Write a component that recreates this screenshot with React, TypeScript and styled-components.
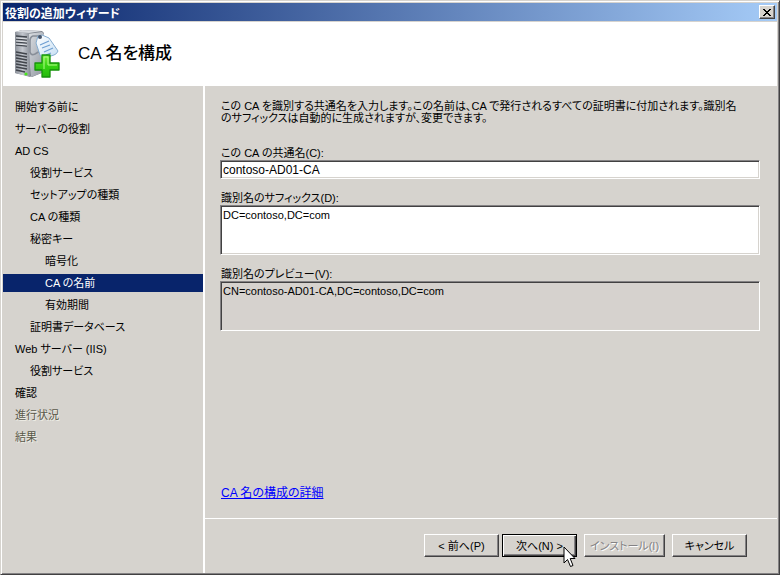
import React, { useState } from "react";
import styled, { createGlobalStyle, css } from "styled-components";

const face = "#d6d3ce";
const navy = "#08246b";

const GlobalStyle = createGlobalStyle`
  *, *::before, *::after { box-sizing: border-box; }
  body { margin: 0; background: ${face}; }
  body, button, input, textarea {
    font-family: "Liberation Sans", "Noto Sans CJK JP", sans-serif;
    font-size: 11px;
    font-feature-settings: "palt";
    color: #000;
  }
`;

const sunken = css`
  border: 1px solid;
  border-color: #848284 #fff #fff #848284;
  box-shadow: inset 1px 1px 0 #424142, inset -1px -1px 0 ${face};
`;

const raised = css`
  border: 1px solid;
  border-color: #fff #424142 #424142 #fff;
  box-shadow: inset -1px -1px 0 #848284;
`;

const Window = styled.main`
  display: flex;
  flex-direction: column;
  min-height: 100vh;
  padding: 2px 1px 0;
  background: ${face};
  border: 1px solid;
  border-color: ${face} #424142 #424142 ${face};
  box-shadow: inset 1px 1px 0 #fff, inset -1px -1px 0 #848284;
`;

const Frame = styled.div`
  display: flex;
  flex-direction: column;
  flex: 1;
  padding: 0 1px 1px 1px;
`;

const TitleBar = styled.header`
  display: flex;
  align-items: center;
  justify-content: space-between;
  height: 18px;
  padding: 0 2px;
  background: linear-gradient(to right, ${navy}, #a5cbf7);
  color: #fff;
  font-size: 12px;
  font-weight: 700;
`;

const CloseButton = styled.button`
  ${raised}
  display: grid;
  place-items: center;
  width: 16px;
  height: 14px;
  padding: 0;
  background: ${face};
`;

const Banner = styled.div`
  display: flex;
  align-items: center;
  gap: 15px;
  height: 65px;
  padding-left: 10px;
  background: #fff;
  border-top: 1px solid ${face};
`;

const Heading = styled.h1`
  margin: 0;
  font-size: 17px;
  line-height: 24px;
  font-weight: 500;
`;

const Body = styled.div`
  display: grid;
  grid-template-columns: 202px minmax(0, 1fr);
  flex: 1;
`;

const Steps = styled.nav`
  display: flex;
  flex-direction: column;
  gap: 4px;
  padding-top: 12px;
  border-right: 2px solid #fff;
`;

const Step = styled.button<{ $level: number }>`
  height: 18px;
  padding: 0 0 0 ${(p) => 12 + p.$level * 15}px;
  border: 0;
  background: none;
  line-height: 18px;
  text-align: left;
  white-space: nowrap;

  &[aria-current="step"] {
    background: ${navy};
    color: #fff;
  }

  &:disabled {
    color: #5a594a;
    text-shadow: 1px 1px 0 #efefe7;
  }
`;

const Page = styled.section`
  display: flex;
  flex-direction: column;
`;

const Form = styled.form`
  display: flex;
  flex-direction: column;
  flex: 1;
  padding: 14px 17px 18px 15px;
`;

const Description = styled.p`
  margin: 0 0 22px;
  padding-left: 1px;
  line-height: 12px;
`;

const Field = styled.div`
  display: flex;
  flex-direction: column;
  margin-bottom: 12px;
`;

const Label = styled.label`
  padding-left: 1px;
  line-height: 14px;
`;

const TextBox = styled.input`
  ${sunken}
  width: 100%;
  height: 19px;
  padding: 0 2px;
  background: #fff;
  font-size: 12px;
  outline: 0;
`;

const TextArea = styled.textarea`
  ${sunken}
  width: 100%;
  height: 50px;
  padding: 2px;
  line-height: 14px;
  background: #fff;
  outline: 0;
  resize: none;

  &:read-only { background: #d6d2ce; }
`;

const Link = styled.a`
  align-self: flex-start;
  margin: auto 0 0 1px;
  font-size: 12px;
  line-height: 14px;
  color: #00f;
`;

const Footer = styled.footer`
  display: flex;
  justify-content: flex-end;
  gap: 7px;
  padding: 15px 30px 16px;
  border-top: 1px solid #fff;
`;

const Pair = styled.div`
  display: flex;
  gap: 3px;
`;

const PushButton = styled.button<{ $wide?: boolean; $default?: boolean }>`
  ${raised}
  position: relative;
  width: ${(p) => (p.$wide ? 81 : 75)}px;
  height: 23px;
  padding: 0;
  background: ${face};
  line-height: 20px;
  white-space: nowrap;

  ${(p) =>
    p.$default &&
    css`
      border-color: #000;
      box-shadow: inset 1px 1px 0 #fff, inset -1px -1px 0 #424142,
        inset -2px -2px 0 #848284;
    `}

  &:disabled {
    color: #848284;
    text-shadow: 1px 1px 0 #fff;
  }
`;

const Pointer = styled.svg`
  position: absolute;
  left: 60px;
  top: 11px;
  pointer-events: none;
`;

const ServerIcon = () => (
  <svg width="50" height="52" viewBox="0 0 50 52" aria-hidden="true">
    <defs>
      <linearGradient id="front" x1="0" x2="1">
        <stop offset="0" stopColor="#8b9099" />
        <stop offset="0.5" stopColor="#c3c7ce" />
        <stop offset="1" stopColor="#8d929b" />
      </linearGradient>
      <linearGradient id="side" x1="0" x2="1" y2="1">
        <stop offset="0" stopColor="#dfe2e6" />
        <stop offset="1" stopColor="#8f959f" />
      </linearGradient>
      <linearGradient id="tag" x1="0" x2="1" y2="1">
        <stop offset="0" stopColor="#ffffff" />
        <stop offset="1" stopColor="#c5def3" />
      </linearGradient>
      <linearGradient id="plus" x2="0" y2="1">
        <stop offset="0" stopColor="#7af03c" />
        <stop offset="0.5" stopColor="#35d213" />
        <stop offset="1" stopColor="#25b90c" />
      </linearGradient>
    </defs>
    <path d="M2 4 9 2 29 3 31 5V44L19 49 2 45Z" fill="#7d828b" />
    <path d="M14 6 29 4 31 6V44L18 49Z" fill="url(#side)" />
    <path d="M2 4 16 5 17 49 2 45Z" fill="url(#front)" />
    <path d="M2 4 9 2 29 3 16 5Z" fill="#d5d8dd" />
    <path
      d="M3 8 14 9M3 11 14 12M3 14 14 15M3 17 14 18"
      stroke="#42474f"
      strokeWidth="1.3"
    />
    <path d="M3 10 14 11M3 13 14 14M3 16 14 17" stroke="#eef0f3" strokeWidth="0.8" />
    <path
      d="M3 24 14 26M3 27 14 29M3 30 14 32M3 33 14 35M3 36 14 38M3 39 14 41M3 42 12 44"
      stroke="#41454c"
      strokeWidth="1.7"
    />
    <circle cx="13" cy="46" r="1.6" fill="#48e51b" />
    <path d="M27 8H20Q17 9 17 13V24Q18 28 22 26L27 23" fill="none" stroke="#888e98" strokeWidth="1.6" />
    <path
      d="M25 8 29 7 36 10 45 23Q44 26 41 27L31 30Q28 30 27 27L23 15Z"
      fill="url(#tag)"
      stroke="#86add0"
    />
    <circle cx="27" cy="9" r="2" fill="#48566b" />
    <path d="M27 17 36 13M29 20 37 17M31 24 40 20M33 27 38 25" stroke="#6d9ed1" strokeWidth="1.2" />
    <path
      d="M29 27H37V35H46V42H37V49H29V42H22V35H29Z"
      fill="url(#plus)"
      stroke="#15920a"
      strokeWidth="1.3"
      strokeLinejoin="round"
    />
    <path d="M31 41V29H35V37H44" fill="none" stroke="#b1fa87" />
  </svg>
);

const steps = [
  { label: "開始する前に", level: 0 },
  { label: "サーバーの役割", level: 0 },
  { label: "AD CS", level: 0 },
  { label: "役割サービス", level: 1 },
  { label: "セットアップの種類", level: 1 },
  { label: "CA の種類", level: 1 },
  { label: "秘密キー", level: 1 },
  { label: "暗号化", level: 2 },
  { label: "CA の名前", level: 2, current: true },
  { label: "有効期間", level: 2 },
  { label: "証明書データベース", level: 1 },
  { label: "Web サーバー (IIS)", level: 0 },
  { label: "役割サービス", level: 1 },
  { label: "確認", level: 0 },
  { label: "進行状況", level: 0, disabled: true },
  { label: "結果", level: 0, disabled: true },
];

export default function App() {
  const [name, setName] = useState("contoso-AD01-CA");
  const [suffix, setSuffix] = useState("DC=contoso,DC=com");

  return (
    <>
      <GlobalStyle />
      <Window lang="ja">
        <Frame>
          <TitleBar>
            <span>役割の追加ウィザード</span>
            <CloseButton type="button" aria-label="閉じる">
              <svg width="8" height="7" viewBox="0 0 8 7" shapeRendering="crispEdges">
                <path d="M0 0h2v1h1v1h2V1h1V0h2v1H7v1H6v1H5v1h1v1h1v1h1v1H6V6H5V5H3v1H2v1H0V6h1V5h1V4h1V3H2V2H1V1H0Z" />
              </svg>
            </CloseButton>
          </TitleBar>
          <Banner>
            <ServerIcon />
            <Heading>CA 名を構成</Heading>
          </Banner>
          <Body>
            <Steps>
              {steps.map((s, i) => (
                <Step
                  key={i}
                  type="button"
                  $level={s.level}
                  disabled={s.disabled}
                  aria-current={s.current ? "step" : undefined}
                >
                  {s.label}
                </Step>
              ))}
            </Steps>
            <Page>
              <Form id="ca-name" onSubmit={(e) => e.preventDefault()}>
                <Description>
                  この CA を識別する共通名を入力します。この名前は、CA で発行されるすべての証明書に付加されます。識別名
                  <br />
                  のサフィックスは自動的に生成されますが、変更できます。
                </Description>
                <Field>
                  <Label htmlFor="common">この CA の共通名(C):</Label>
                  <TextBox id="common" value={name} onChange={(e) => setName(e.target.value)} />
                </Field>
                <Field>
                  <Label htmlFor="suffix">識別名のサフィックス(D):</Label>
                  <TextArea id="suffix" value={suffix} onChange={(e) => setSuffix(e.target.value)} />
                </Field>
                <Field>
                  <Label htmlFor="preview">識別名のプレビュー(V):</Label>
                  <TextArea id="preview" readOnly value={`CN=${name},${suffix}`} />
                </Field>
                <Link href="#details">CA 名の構成の詳細</Link>
              </Form>
              <Footer>
                <Pair>
                  <PushButton type="button">&lt; 前へ(P)</PushButton>
                  <PushButton type="submit" form="ca-name" $default>
                    次へ(N) &gt;
                    <Pointer width="13" height="22" viewBox="0 0 13 22" aria-hidden="true">
                      <path
                        d="M1 1V17L4.500 13.500 7.500 20.500 10 19.500 7.200 12.500H12Z"
                        fill="#fff"
                        stroke="#000"
                      />
                    </Pointer>
                  </PushButton>
                </Pair>
                <PushButton type="button" $wide disabled>
                  インストール(I)
                </PushButton>
                <PushButton type="button">キャンセル</PushButton>
              </Footer>
            </Page>
          </Body>
        </Frame>
      </Window>
    </>
  );
}
